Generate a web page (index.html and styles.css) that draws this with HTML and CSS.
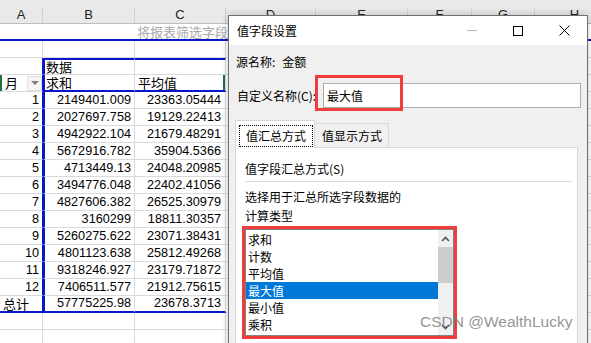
FILE: index.html
```html
<!DOCTYPE html>
<html lang="zh-CN">
<head>
    <meta charset="UTF-8">
    <title>值字段设置</title>
    <link rel="stylesheet" href="styles.css">
</head>
<body>
    <div class="sheet">
        <div class="colhead">
            <div>A</div><div>B</div><div>C</div><div>D</div><div>E</div><div>F</div><div>G</div><div>H</div>
        </div>
        <div class="filter"><span>将报表筛选字段拖至此处</span></div>
        <div class="row"><div></div><div></div><div></div><div></div></div>
        <div class="row"><div class="edge"></div><div class="bl bt cjk">数据</div><div class="bt"></div><div></div></div>
        <div class="row">
            <div class="cjk sel-l head-a edge"><span>月</span><span class="dd"></span></div>
            <div class="bl bb cjk">求和</div>
            <div class="bb cjk sel-r">平均值</div>
            <div></div>
        </div>
        <div class="row"><div class="num edge">1</div><div class="bl num">2149401.009</div><div class="num pr">23363.05444</div><div></div></div>
        <div class="row"><div class="num edge">2</div><div class="bl num">2027697.758</div><div class="num pr">19129.22413</div><div></div></div>
        <div class="row"><div class="num edge">3</div><div class="bl num">4942922.104</div><div class="num pr">21679.48291</div><div></div></div>
        <div class="row"><div class="num edge">4</div><div class="bl num">5672916.782</div><div class="num pr">35904.5366</div><div></div></div>
        <div class="row"><div class="num edge">5</div><div class="bl num">4713449.13</div><div class="num pr">24048.20985</div><div></div></div>
        <div class="row"><div class="num edge">6</div><div class="bl num">3494776.048</div><div class="num pr">22402.41056</div><div></div></div>
        <div class="row"><div class="num edge">7</div><div class="bl num">4827606.382</div><div class="num pr">26525.30979</div><div></div></div>
        <div class="row"><div class="num edge">8</div><div class="bl num">3160299</div><div class="num pr">18811.30357</div><div></div></div>
        <div class="row"><div class="num edge">9</div><div class="bl num">5260275.622</div><div class="num pr">23071.38431</div><div></div></div>
        <div class="row"><div class="num edge">10</div><div class="bl num">4801123.638</div><div class="num pr">25812.49268</div><div></div></div>
        <div class="row"><div class="num edge">11</div><div class="bl num">9318246.927</div><div class="num pr">23179.71872</div><div></div></div>
        <div class="row"><div class="num edge">12</div><div class="bl num">7406511.577</div><div class="num pr">21912.75615</div><div></div></div>
        <div class="row"><div class="bb cjk edge">总计</div><div class="bl bb num">57775225.98</div><div class="bb num pr">23678.3713</div><div></div></div>
        <div class="row"><div></div><div></div><div></div><div></div></div>
        <div class="row"><div></div><div></div><div></div><div></div></div>
    </div>

    <div class="dialog">
        <div class="titlebar">
            <span class="title">值字段设置</span>
            <span class="wbtn"><span class="ico-min"></span></span>
            <span class="wbtn"><span class="ico-max"></span></span>
            <span class="wbtn">
                <svg width="11" height="11" viewBox="0 0 11 11"><path d="M0.5 0.5 L10.5 10.5 M10.5 0.5 L0.5 10.5" stroke="#000" stroke-width="1" fill="none"/></svg>
            </span>
        </div>
        <div class="dlg-body">
            <div class="src"><span>源名称:</span><span class="src-val">金额</span></div>
            <div class="name-row">
                <label>自定义名称(C):</label>
                <div class="name-input">最大值</div>
                <span class="mark"></span>
            </div>
            <div class="tabs">
                <div class="tab active"><span class="focus">值汇总方式</span></div>
                <div class="tab">值显示方式</div>
            </div>
            <div class="panel">
                <div class="sec">值字段汇总方式(S)</div>
                <div class="sep"></div>
                <p class="desc">选择用于汇总所选字段数据的<br>计算类型</p>
                <div class="listbox">
                    <ul class="items">
                        <li>求和</li>
                        <li>计数</li>
                        <li>平均值</li>
                        <li class="on">最大值</li>
                        <li>最小值</li>
                        <li>乘积</li>
                    </ul>
                    <div class="scroll">
                        <span class="arrow">
                            <svg width="9" height="6" viewBox="0 0 9 6"><path d="M1 5 L4.5 1.5 L8 5" stroke="#555" stroke-width="1.6" fill="none"/></svg>
                        </span>
                        <span class="thumb"></span>
                        <span class="track"></span>
                        <span class="arrow">
                            <svg width="9" height="6" viewBox="0 0 9 6"><path d="M1 1 L4.5 4.5 L8 1" stroke="#555" stroke-width="1.6" fill="none"/></svg>
                        </span>
                    </div>
                </div>
            </div>
        </div>
    </div>

    <div class="watermark">CSDN @WealthLucky</div>
</body>
</html>
```

FILE: styles.css
```css
* {
    box-sizing: border-box;
}
body {
    margin: 0;
    width: 591px;
    height: 343px;
    overflow: hidden;
    position: relative;
    background: #fff;
    color: #000;
    font-family: "Liberation Sans", "Noto Sans CJK SC", sans-serif;
}

/* worksheet */
.colhead {
    display: grid;
    grid-template-columns: 43px 92px 91px 90px 92px 64px 63px 80px;
    height: 24px;
    padding-top: 7px;
    background: #e9e9e9;
    border-bottom: 1px solid #bdbdbd;
}
.colhead div {
    border-right: 1px solid #d0d0d0;
    padding-top: 1px;
    text-align: center;
    font-size: 13px;
    line-height: 14px;
    color: #222;
}
.filter {
    height: 17px;
    padding-left: 137px;
    border-bottom: 2px solid #0717c9;
    font-family: "Noto Sans CJK SC", sans-serif;
    font-size: 13px;
    line-height: 15px;
    color: #a8a8a8;
    white-space: nowrap;
}
.filter span {
    display: inline-block;
    width: 91px;
    overflow: hidden;
    vertical-align: top;
}
.row {
    display: grid;
    grid-template-columns: 43px 92px 91px 1fr;
    height: 17px;
    font-size: 12.7px;
}
.row > div {
    border-right: 1px solid #dadada;
    border-bottom: 1px solid #dadada;
    padding: 0 3px;
    line-height: 16px;
    white-space: nowrap;
}
.row > div:last-child {
    border-right: none;
}
.row > .edge {
    border-right-color: #0717c9;
}
.num {
    text-align: right;
}
.pr {
    padding-right: 4px !important;
}
.cjk {
    font-family: "Noto Sans CJK SC", sans-serif;
    font-size: 13px;
}
.row > .bl {
    border-left: 2px solid #0717c9;
    padding-left: 1px;
}
.row > .bt {
    border-top: 2px solid #0717c9;
    line-height: 14px;
}
.row > .bb {
    border-bottom: 2px solid #0717c9;
    line-height: 15px;
}
.head-a {
    display: flex;
    justify-content: space-between;
    align-items: center;
    padding: 0 0 0 5px !important;
}
.sel-l {
    box-shadow: inset 2px 0 0 #217346;
}
.sel-r {
    box-shadow: inset -2px 0 0 #217346;
}
.dd {
    width: 15px;
    height: 15px;
    background: #f4f4f4;
    border: 1px solid #e2e2e2;
    display: flex;
    align-items: center;
    justify-content: center;
}
.dd::after {
    content: "";
    border-left: 4px solid transparent;
    border-right: 4px solid transparent;
    border-top: 4px solid #808080;
}

/* dialog */
.dialog {
    position: absolute;
    left: 228px;
    top: 15px;
    width: 360px;
    height: 340px;
    background: #f0f0f0;
    border: 1px solid #6f6f6f;
    box-shadow: 0 0 8px rgba(0, 0, 0, 0.2);
    font-family: "Noto Sans CJK SC", "Liberation Sans", sans-serif;
    font-size: 12px;
}
.titlebar {
    display: flex;
    align-items: center;
    height: 29px;
    background: #fff;
}
.title {
    flex: 1;
    padding-left: 8px;
    line-height: 16px;
}
.wbtn {
    width: 46px;
    height: 29px;
    display: flex;
    align-items: center;
    justify-content: center;
}
.ico-min {
    width: 10px;
    height: 1px;
    background: #b4b4b4;
}
.ico-max {
    width: 10px;
    height: 10px;
    border: 1px solid #000;
}
.dlg-body {
    padding: 9px 6px 0 6px;
}
.src {
    padding-left: 1px;
    line-height: 16px;
}
.src-val {
    margin-left: 7px;
}
.name-row {
    position: relative;
    display: flex;
    align-items: center;
    height: 25px;
    margin-top: 13px;
    padding-left: 2px;
}
.name-row label {
    width: 86px;
}
.name-input {
    flex: 1;
    height: 25px;
    padding-left: 3px;
    line-height: 23px;
    background: #fff;
    border: 1px solid #adadad;
}
.mark {
    position: absolute;
    left: 80px;
    top: -8px;
    width: 88px;
    height: 36px;
    border: 3px solid #f23b3b;
}
.tabs {
    display: flex;
    align-items: flex-end;
    height: 27px;
    margin-top: 12px;
}
.tab {
    height: 24px;
    width: 74px;
    padding-left: 7px;
    line-height: 23px;
    background: #f0f0f0;
    border: 1px solid #d9d9d9;
    border-left: none;
    border-bottom: none;
}
.tab.active {
    position: relative;
    z-index: 1;
    width: 80px;
    height: 28px;
    margin-bottom: -1px;
    padding: 3px 0 0 3px;
    background: #fff;
    border-left: 1px solid #d9d9d9;
}
.focus {
    display: inline-block;
    height: 22px;
    padding: 0 6px;
    line-height: 20px;
    border: 1px dotted #000;
}
.panel {
    height: 200px;
    margin-right: 3px;
    padding: 13px 5px 0 9px;
    background: #fff;
    border: 1px solid #d9d9d9;
}
.sec {
    line-height: 16px;
}
.sep {
    height: 1px;
    margin-top: 4px;
    background: #dcdcdc;
}
.desc {
    margin: 5px 0 0;
    line-height: 19px;
}
.listbox {
    display: flex;
    width: 209px;
    height: 107px;
    margin-top: 4px;
    border: 1px solid #828282;
    outline: 3px solid #f23b3b;
}
.items {
    flex: 1;
    margin: 0;
    padding: 1px 0 0;
    list-style: none;
}
.items li {
    height: 17px;
    padding-left: 2px;
    line-height: 17px;
}
.items li.on {
    background: #0078d7;
    color: #fff;
}
.scroll {
    width: 15px;
    display: flex;
    flex-direction: column;
    background: #f0f0f0;
}
.arrow {
    height: 17px;
    display: flex;
    align-items: center;
    justify-content: center;
}
.thumb {
    height: 36px;
    background: #cdcdcd;
}
.track {
    flex: 1;
}

.watermark {
    position: absolute;
    left: 420px;
    top: 313px;
    font-size: 15.5px;
    line-height: 18px;
    color: rgba(120, 120, 120, 0.8);
}
```
